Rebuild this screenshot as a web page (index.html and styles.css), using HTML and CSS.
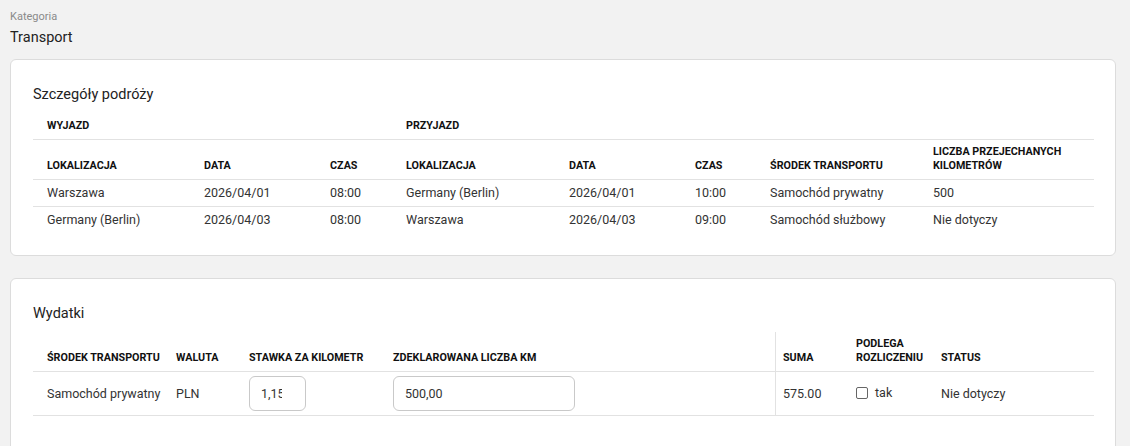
FILE: index.html
```html
<!DOCTYPE html>
<html lang="pl">
  <head>
    <meta charset="UTF-8" />
    <meta name="viewport" content="width=device-width, initial-scale=1.0" />
    <title>Transport</title>
    <link rel="stylesheet" href="styles.css">
  </head>
  <body>
    <div class="page">
      <div class="field">
        <div class="field-label">Kategoria</div>
        <div class="field-value">Transport</div>
      </div>

      <section class="card">
        <h2 class="card-title">Szczegóły podróży</h2>
        <table class="grid trip">
          <colgroup>
            <col style="width: 157px" />
            <col style="width: 126px" />
            <col style="width: 76px" />
            <col style="width: 163px" />
            <col style="width: 126px" />
            <col style="width: 75px" />
            <col style="width: 163px" />
            <col style="width: 175px" />
          </colgroup>
          <thead>
            <tr class="group-row">
              <th colspan="3">Wyjazd</th>
              <th colspan="3">Przyjazd</th>
              <th colspan="2"></th>
            </tr>
            <tr>
              <th>Lokalizacja</th>
              <th>Data</th>
              <th>Czas</th>
              <th>Lokalizacja</th>
              <th>Data</th>
              <th>Czas</th>
              <th>Środek transportu</th>
              <th>Liczba przejechanych kilometrów</th>
            </tr>
          </thead>
          <tbody>
            <tr>
              <td>Warszawa</td>
              <td>2026/04/01</td>
              <td>08:00</td>
              <td>Germany (Berlin)</td>
              <td>2026/04/01</td>
              <td>10:00</td>
              <td>Samochód prywatny</td>
              <td>500</td>
            </tr>
            <tr>
              <td>Germany (Berlin)</td>
              <td>2026/04/03</td>
              <td>08:00</td>
              <td>Warszawa</td>
              <td>2026/04/03</td>
              <td>09:00</td>
              <td>Samochód służbowy</td>
              <td>Nie dotyczy</td>
            </tr>
          </tbody>
        </table>
      </section>

      <section class="card card-last">
        <h2 class="card-title">Wydatki</h2>
        <table class="grid costs">
          <colgroup>
            <col style="width: 129px" />
            <col style="width: 73px" />
            <col style="width: 144px" />
            <col style="width: 396px" />
            <col style="width: 67px" />
            <col style="width: 85px" />
            <col style="width: 167px" />
          </colgroup>
          <thead>
            <tr>
              <th>Środek transportu</th>
              <th>Waluta</th>
              <th>Stawka za kilometr</th>
              <th>Zdeklarowana liczba km</th>
              <th class="sum-col">Suma</th>
              <th>Podlega<br />rozliczeniu</th>
              <th>Status</th>
            </tr>
          </thead>
          <tbody>
            <tr>
              <td>Samochód prywatny</td>
              <td>PLN</td>
              <td><input class="input input-rate" type="text" value="1,15" /></td>
              <td><input class="input input-km" type="text" value="500,00" /></td>
              <td class="sum-col">575.00</td>
              <td>
                <label class="check"><span class="check-box"></span>tak</label>
              </td>
              <td>Nie dotyczy</td>
            </tr>
          </tbody>
        </table>
      </section>
    </div>
  </body>
</html>
```

FILE: styles.css
```css
* {
  box-sizing: border-box;
}

body {
  margin: 0;
  background-color: #f2f2f2;
  font-family: Roboto, "Liberation Sans", sans-serif;
  color: #222;
}

.page {
  padding: 10px 14px 10px 10px;
}

.field-label {
  font-size: 11px;
  line-height: 14px;
  color: #8a8a8a;
}

.field-value {
  margin-top: 4px;
  font-size: 14.5px;
  line-height: 20px;
  color: #222;
}

.card {
  margin-top: 11px;
  background-color: #fff;
  border: 1px solid #dcdcdc;
  border-radius: 6px;
  padding: 25px 21px 22px 22px;
}

.card + .card {
  margin-top: 22px;
}

.card-last {
  padding-bottom: 40px;
}

.card-title {
  margin: 0 0 8px;
  font-size: 14.5px;
  line-height: 20px;
  font-weight: 400;
  color: #222;
}

.grid {
  width: 100%;
  table-layout: fixed;
  border-collapse: separate;
  border-spacing: 0;
}

.grid th {
  text-align: left;
  vertical-align: bottom;
  font-size: 10.75px;
  line-height: 14px;
  font-weight: 700;
  text-transform: uppercase;
  color: #111;
  padding: 5px 4px 6px 14px;
  border-bottom: 1px solid #e2e2e2;
}

.grid .group-row th {
  vertical-align: middle;
  padding-top: 6px;
  padding-bottom: 6px;
}

.grid td {
  font-size: 12.5px;
  line-height: 18px;
  color: #333;
  padding: 4px 4px 4px 14px;
  vertical-align: middle;
  border-bottom: 1px solid #e2e2e2;
  white-space: nowrap;
}

.trip tbody tr:last-child td {
  border-bottom: none;
}

.costs th {
  white-space: nowrap;
}

.costs .sum-col {
  border-left: 1px solid #e2e2e2;
  padding-left: 7px;
}

.input {
  display: block;
  height: 35px;
  border: 1px solid #c9c9c9;
  border-radius: 6px;
  padding: 0 10px 0 11px;
  font-family: Roboto, "Liberation Sans", sans-serif;
  font-size: 12.5px;
  color: #333;
  background-color: #fff;
  outline: none;
}

.input-rate {
  width: 57px;
  padding-right: 23px;
}

.input-km {
  width: 182px;
}

.check {
  display: inline-flex;
  align-items: center;
  gap: 7px;
}

.check-box {
  width: 12px;
  height: 12px;
  border: 1px solid #666;
  border-radius: 2px;
}
```
